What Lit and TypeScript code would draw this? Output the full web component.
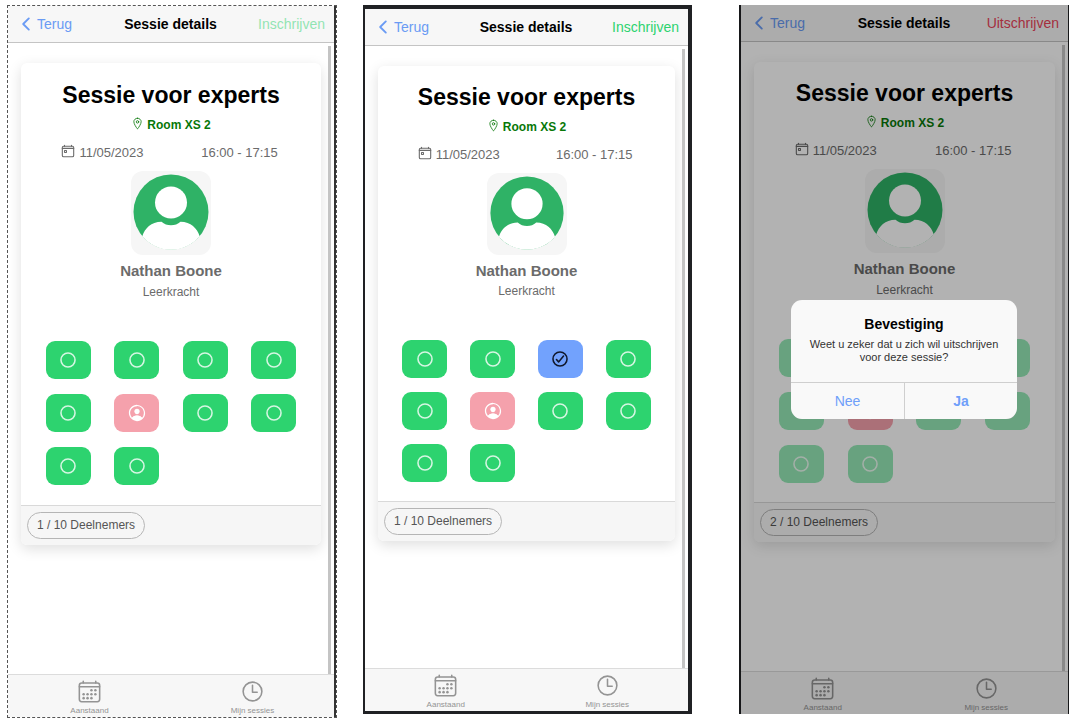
import { LitElement, html, svg, css, nothing } from "lit";
import { customElement, property } from "lit/decorators.js";
import { classMap } from "lit/directives/class-map.js";

type Seat = "free" | "taken" | "chosen";

interface Screen {
  variant: string;
  action: string;
  actionTone: string;
  actionDisabled: boolean;
  seats: Seat[];
  seatsDisabled: boolean;
  count: string;
  confirm: boolean;
}

const seatsWith = (chosen: number): Seat[] =>
  Array.from({ length: 10 }, (_, i) => (i === 5 ? "taken" : i === chosen ? "chosen" : "free"));

const screens: Screen[] = [
  { variant: "dashed", action: "Inschrijven", actionTone: "success", actionDisabled: true, seats: seatsWith(-1), seatsDisabled: false, count: "1 / 10 Deelnemers", confirm: false },
  { variant: "framed", action: "Inschrijven", actionTone: "success", actionDisabled: false, seats: seatsWith(2), seatsDisabled: false, count: "1 / 10 Deelnemers", confirm: false },
  { variant: "dimmed", action: "Uitschrijven", actionTone: "danger", actionDisabled: false, seats: seatsWith(2), seatsDisabled: true, count: "2 / 10 Deelnemers", confirm: true },
];

const icons = {
  back: svg`<path class="line bold" d="M328 112L184 256l144 144"/>`,
  pin: svg`<path class="line" d="M256 48c-79.5 0-144 61.39-144 137 0 87 96 224.87 131.25 272.49a15.77 15.77 0 0025.5 0C304 409.89 400 272.07 400 185c0-75.61-64.5-137-144-137z"/><circle class="line" cx="256" cy="192" r="48"/>`,
  today: svg`<rect class="line heavy" x="48" y="80" width="416" height="384" rx="48"/><rect class="line heavy" x="128" y="240" width="72" height="72" rx="8"/><path class="line heavy" d="M128 80V48M384 80V48M464 160H48"/>`,
  calendar: svg`<rect class="line" x="48" y="80" width="416" height="384" rx="48"/><path class="line" d="M464 160H48M128 48v32M384 48v32"/>
    <g><circle cx="296" cy="232" r="26"/><circle cx="376" cy="232" r="26"/><circle cx="296" cy="312" r="26"/><circle cx="376" cy="312" r="26"/><circle cx="136" cy="312" r="26"/><circle cx="216" cy="312" r="26"/><circle cx="136" cy="392" r="26"/><circle cx="216" cy="392" r="26"/><circle cx="296" cy="392" r="26"/></g>`,
  clock: svg`<circle class="line" cx="256" cy="256" r="192"/><path class="line" d="M256 128v144h96"/>`,
  free: svg`<circle class="line heavy" cx="256" cy="256" r="180"/>`,
  chosen: svg`<circle class="line heavy" cx="256" cy="256" r="180"/><path class="line heavy" d="M346 182L220 330 166 270"/>`,
  taken: svg`<path d="M258.9 48C141.92 46.42 46.42 141.92 48 258.9c1.56 112.19 92.91 203.54 205.1 205.1 117 1.6 212.48-93.9 210.88-210.88C462.44 140.91 371.09 49.56 258.9 48zm126.42 327.25a4 4 0 01-6.14-.32 124.27 124.27 0 00-32.35-29.59C321.37 329 289.11 320 256 320s-65.37 9-90.83 25.34a124.24 124.24 0 00-32.35 29.58 4 4 0 01-6.14.32A175.32 175.32 0 0180 259c-1.63-97.31 78.22-178.76 175.57-179S432 158.81 432 256a175.32 175.32 0 01-46.68 119.25z"/><path d="M256 144c-19.72 0-37.55 7.39-50.22 20.82s-19 32-17.57 51.93C191.11 256 221.52 288 256 288s64.83-32 67.79-71.24c1.48-19.74-4.8-38.14-17.68-51.82C293.39 151.44 275.59 144 256 144z"/><path d="M128 378Q170 322 256 320Q342 322 384 378Q330 440 256 440Q182 440 128 378z"/>`,
};

const icon = (name: keyof typeof icons, size: string) =>
  html`<svg class="icon ${size}" viewBox="0 0 512 512" aria-hidden="true">${icons[name]}</svg>`;

const seatLabels: Record<Seat, string> = { free: "Vrije plaats", taken: "Bezette plaats", chosen: "Gekozen plaats" };

@customElement("session-screen")
export class SessionScreen extends LitElement {
  @property({ attribute: false }) screen!: Screen;

  static styles = css`
    :host { display: flex; }
    * { box-sizing: border-box; }
    h1, h2, p { margin: 0; }
    button { font: inherit; color: inherit; background: none; border: 0; padding: 0; margin: 0; }
    a { color: inherit; text-decoration: none; }
    .icon { display: block; flex: none; fill: currentColor; }
    .line { fill: none; stroke: currentColor; stroke-width: 32; stroke-linecap: round; stroke-linejoin: round; }
    .heavy { stroke-width: 40; }
    .bold { stroke-width: 48; }
    .s13 { width: 13px; height: 13px; }
    .s14 { width: 14px; height: 14px; }
    .s20 { width: 20px; height: 20px; }
    .s25 { width: 25px; height: 25px; }

    .phone {
      position: relative; flex: 1; min-width: 0; display: flex; flex-direction: column;
      background: #fff; color: #000;
      font-family: "Liberation Sans", Arial, sans-serif; font-size: 14px;
      --top: 17px; --bottom: 19px; --row-gap: 15px; --avatar: 84px; --role-gap: 4px;
    }
    .dashed { border: 1px dashed #555; --top: 18px; --bottom: 20px; }
    .inner { flex: 1; display: flex; flex-direction: column; min-height: 0; }
    .dashed .inner { border-right: 2px solid #333; }
    .framed { border: solid #202124; border-width: 4px 4px 3px 2px; --row-gap: 14px; --avatar: 82px; --role-gap: 3px; }
    .dimmed { border: solid #202124; border-width: 0 1px 0 2px; }

    .bar {
      display: grid; grid-template-columns: 1fr auto 1fr; align-items: center;
      height: 37px; padding: 0 9px 0 8px; background: #f7f7f7; border-bottom: 1px solid #c4c4c4;
    }
    .back { display: flex; align-items: center; justify-self: start; gap: 1px; color: #6a9bf4; }
    .heading { font-size: 14px; font-weight: 700; }
    .action { justify-self: end; }
    .success { color: #2dd36f; }
    .danger { color: #eb445a; }
    .action:disabled { opacity: 0.5; }

    .content { position: relative; flex: 1; padding: 20px 13px; }
    .thumb { position: absolute; right: 3px; top: 3px; bottom: 0; width: 3px; background: #c4c4c4; }
    .card { border-radius: 6px; background: #fff; box-shadow: 0 4px 14px rgba(0, 0, 0, 0.13); overflow: hidden; }
    .body { padding: var(--top) 13px var(--bottom); display: flex; flex-direction: column; align-items: center; color: #6b6b6b; }
    .title { font-size: 23px; line-height: 28px; color: #000; }
    .room { display: flex; align-items: flex-start; gap: 3px; margin-top: 8px; font-size: 12px; line-height: 16px; font-weight: 700; color: #087808; }
    .when { display: grid; grid-template-columns: 1fr 1fr; align-self: stretch; margin-top: 11px; font-size: 13px; line-height: 18px; }
    .cell { display: flex; justify-content: center; gap: 4px; white-space: nowrap; }
    .avatar { display: block; width: 80px; height: var(--avatar); margin-top: 9px; border-radius: 12px; background: #f6f6f6; }
    .name { margin-top: 7px; font-size: 15px; line-height: 18px; font-weight: 700; }
    .role { margin-top: var(--role-gap); font-size: 12px; line-height: 16px; }
    .seats { align-self: stretch; display: grid; grid-template-columns: repeat(4, 1fr); justify-items: center; row-gap: var(--row-gap); margin-top: 41px; }
    .seat { width: 45px; height: 38px; border-radius: 9px; display: grid; place-items: center; color: #fff; background: #2dd36f; }
    .seat .icon { opacity: 0.8; }
    .seat.taken { background: #eb445a; }
    .seat.taken .icon, .seat.chosen .icon { opacity: 1; }
    .seat.chosen { background: #72a2fd; color: #10182c; }
    .seat:disabled { background: #96e9b7; }
    .seat.taken:disabled { background: #f5a1ac; }
    .foot { display: flex; padding: 6px; border-top: 1px solid #d9d9d9; background: #f6f6f6; }
    .chip { padding: 0 9px; border: 1px solid #b5b5b5; border-radius: 14px; font-size: 12px; line-height: 25px; color: #555; }

    .tabs { display: grid; grid-template-columns: 1fr 1fr; padding-top: 4px; height: 43px; background: #f7f7f7; border-top: 1px solid #dcdcdc; color: #949494; }
    .tab { display: flex; flex-direction: column; align-items: center; gap: 2px; font-size: 8px; line-height: 10px; }

    .backdrop { position: absolute; inset: 0 -1px 0 -2px; display: grid; place-items: center; background: rgba(0, 0, 0, 0.3); }
    .dialog { width: 226px; border-radius: 11px; overflow: hidden; background: #f9f9f9; text-align: center; }
    .ask { padding: 14px 16px 18px; }
    .ask-title { font-size: 14px; line-height: 20px; }
    .ask-text { margin-top: 4px; font-size: 11px; line-height: 13px; color: #333; }
    .choices { display: grid; grid-template-columns: 1fr 1fr; border-top: 1px solid #cfcfcf; color: #6f9ffa; line-height: 36px; }
    .choice + .choice { border-left: 1px solid #cfcfcf; font-weight: 700; }
  `;

  render() {
    const s = this.screen;
    return html`
      <section class=${classMap({ phone: true, [s.variant]: true })}>
        <div class="inner">
          <header class="bar">
            <a class="back" href="#">${icon("back", "s20")}Terug</a>
            <h1 class="heading">Sessie details</h1>
            <button class="action ${s.actionTone}" ?disabled=${s.actionDisabled}>${s.action}</button>
          </header>
          <main class="content">
            <article class="card">
              <div class="body">
                <h2 class="title">Sessie voor experts</h2>
                <p class="room">${icon("pin", "s13")}Room XS 2</p>
                <div class="when">
                  <span class="cell">${icon("today", "s14")}<time>11/05/2023</time></span>
                  <span class="cell">16:00 - 17:15</span>
                </div>
                <svg class="avatar" viewBox="0 0 80 84" role="img" aria-label="Nathan Boone">
                  <circle cx="40" cy="41" r="37.5" fill="#2fb266" />
                  <circle cx="40" cy="31.5" r="16" fill="#fff" />
                  <path fill="#fff" d="M11.3 65.3C14 57 20 51 30.5 50.7Q34.5 54.3 40 54.3Q45.5 54.3 49.5 50.7C60 51 66 57 68.7 65.3A37.5 37.5 0 0 1 11.3 65.3z" />
                </svg>
                <p class="name">Nathan Boone</p>
                <p class="role">Leerkracht</p>
                <div class="seats">
                  ${s.seats.map((seat) => html`
                    <button class="seat ${seat}" aria-label=${seatLabels[seat]} ?disabled=${s.seatsDisabled || seat === "taken"}>
                      ${icon(seat, "s20")}
                    </button>`)}
                </div>
              </div>
              <footer class="foot"><span class="chip">${s.count}</span></footer>
            </article>
            <div class="thumb"></div>
          </main>
          <nav class="tabs">
            <a class="tab" href="#">${icon("calendar", "s25")}Aanstaand</a>
            <a class="tab" href="#">${icon("clock", "s25")}Mijn sessies</a>
          </nav>
        </div>
        ${s.confirm ? html`
          <div class="backdrop">
            <div class="dialog" role="alertdialog" aria-labelledby="ask-title" aria-describedby="ask-text">
              <div class="ask">
                <h2 class="ask-title" id="ask-title">Bevestiging</h2>
                <p class="ask-text" id="ask-text">Weet u zeker dat u zich wil uitschrijven voor deze sessie?</p>
              </div>
              <div class="choices">
                <button class="choice">Nee</button>
                <button class="choice">Ja</button>
              </div>
            </div>
          </div>` : nothing}
      </section>`;
  }
}

@customElement("app-root")
export class AppRoot extends LitElement {
  static styles = css`
    :host {
      display: grid; grid-template-columns: 330fr 329fr 351fr; column-gap: 26px;
      box-sizing: border-box; min-height: 100vh; padding: 5px 11px 8px 7px; background: #fff;
    }
    .framed, .dimmed { margin-bottom: 4px; }
    .dimmed { margin-left: 21px; }
  `;

  render() {
    return screens.map((s) => html`<session-screen class=${s.variant} .screen=${s}></session-screen>`);
  }
}
